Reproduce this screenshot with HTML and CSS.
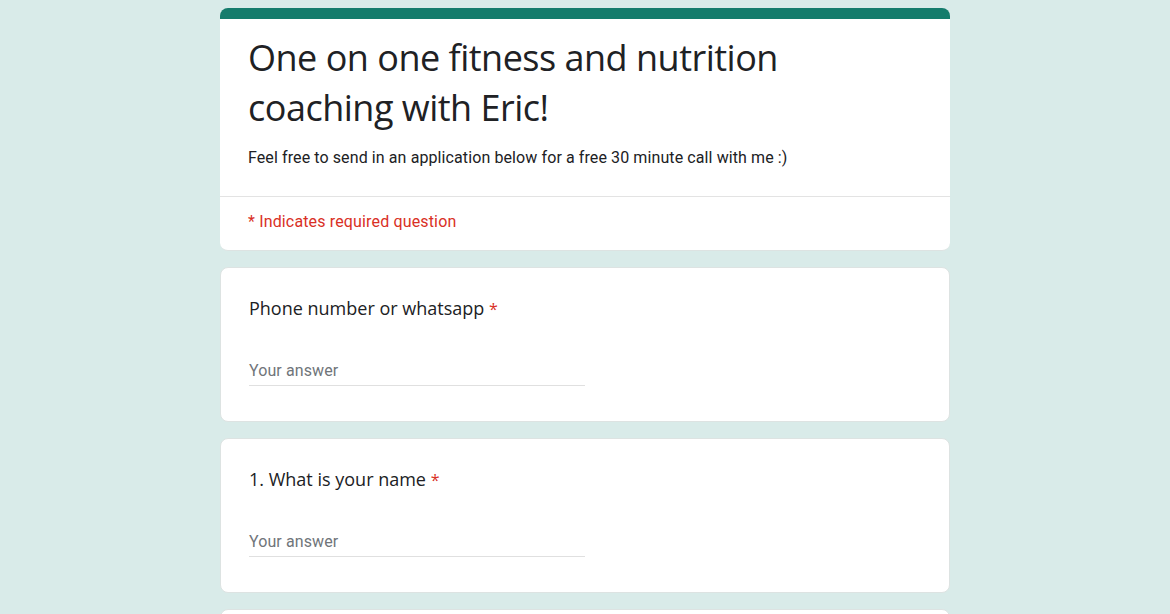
FILE: index.html
```html
<!DOCTYPE html>
<html>
<head>
<meta charset="utf-8">
<link rel="stylesheet" href="styles.css">
</head>
<body>
<div class="form">
  <div class="card header">
    <div class="header-main">
      <h1 class="title">One on one fitness and nutrition coaching with Eric!</h1>
      <p class="desc">Feel free to send in an application below for a free 30 minute call with me :)</p>
    </div>
    <div class="required-note">* Indicates required question</div>
  </div>
  <div class="card question">
    <div class="q-title">Phone number or whatsapp <span class="star">*</span></div>
    <div class="answer">Your answer</div>
  </div>
  <div class="card question">
    <div class="q-title">1. What is your name <span class="star">*</span></div>
    <div class="answer">Your answer</div>
  </div>
  <div class="card question"></div>
</div>
</body>
</html>
```
FILE: styles.css
```css
html, body {
  margin: 0;
  padding: 0;
}
body {
  background: #d9ebe9;
  font-family: Roboto, "Liberation Sans", sans-serif;
  overflow: hidden;
  height: 614px;
}
.form {
  width: 730px;
  margin: 8px auto 0;
  display: flex;
  flex-direction: column;
  gap: 16px;
}
.card {
  background: #ffffff;
  border: 1px solid #dde3e2;
  border-radius: 8px;
  box-sizing: border-box;
}
.header {
  border-top: 11px solid #157c6c;
  border-left: none;
  border-right: none;
  height: 243px;
  display: flex;
  flex-direction: column;
}
.header-main {
  padding: 14px 28px 0;
  height: 178px;
  box-sizing: border-box;
  border-bottom: 1px solid #e3e3e3;
}
.title {
  margin: 0;
  font-family: "Open Sans", sans-serif;
  font-weight: 400;
  font-size: 36px;
  line-height: 50px;
  color: #202124;
  letter-spacing: -0.5px;
}
.desc {
  margin: 14px 0 0;
  font-size: 16px;
  line-height: 22px;
  letter-spacing: 0.1px;
  color: #202124;
}
.required-note {
  padding: 14px 28px 0;
  color: #d93025;
  font-size: 16px;
  line-height: 22px;
  letter-spacing: 0.15px;
}
.question {
  height: 155px;
  padding: 27px 28px 0;
}
.q-title {
  font-family: "Open Sans", sans-serif;
  font-size: 18px;
  line-height: 26px;
  color: #202124;
}
.star {
  color: #d93025;
  font-size: 16px;
}
.answer {
  margin-top: 38px;
  width: 336px;
  border-bottom: 1px solid #e0e0e0;
  color: #70757a;
  font-size: 16px;
  line-height: 22px;
  letter-spacing: 0.1px;
  padding-bottom: 3px;
}
```
